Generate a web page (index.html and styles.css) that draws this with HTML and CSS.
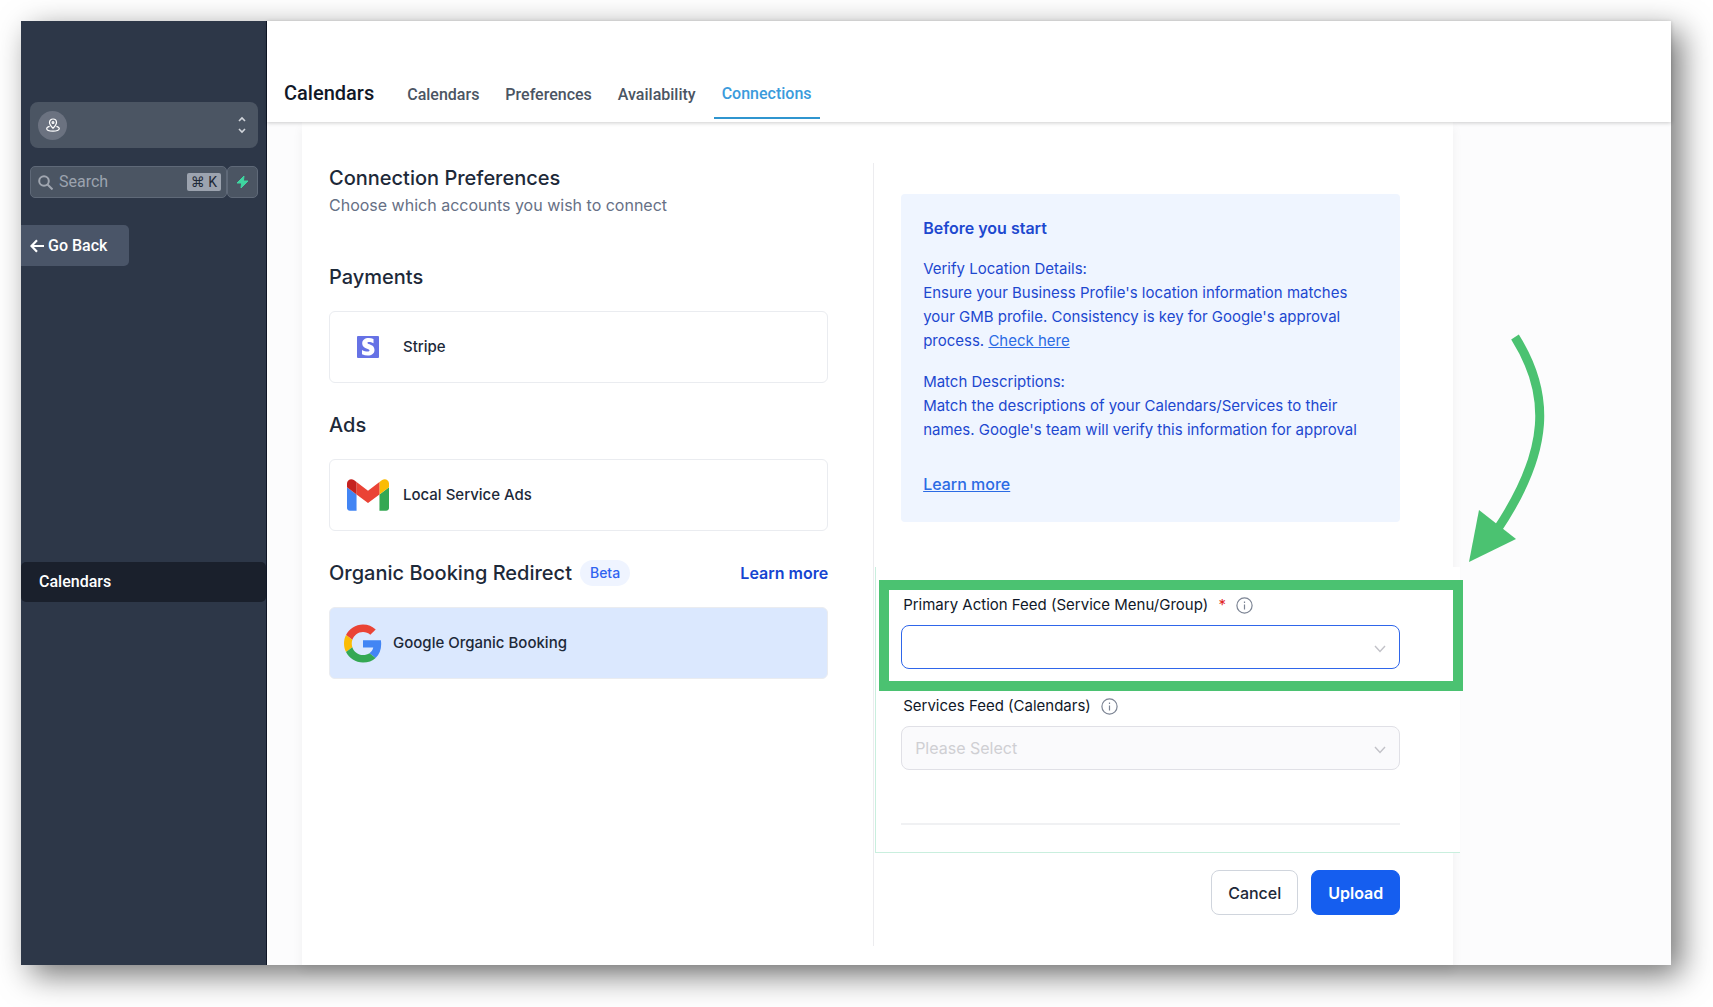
FILE: index.html
```
<!DOCTYPE html>
<html lang="en">
  <head>
    <meta charset="UTF-8" />
    <meta name="viewport" content="width=device-width, initial-scale=1.0" />
    <title>Calendars - Connections</title>
    <link rel="stylesheet" href="styles.css">
  </head>
  <body>
    <div class="window">
      <aside class="sidebar">
        <button class="location-switcher" aria-label="Switch location">
          <span class="location-avatar">
            <svg width="14" height="14" viewBox="0 0 14 14" fill="none" stroke="#fff" stroke-width="1.2">
              <path d="M7 10.2C5 8.3 3.5 6.600 3.500 4.500a3.500 3.500 0 0 1 7 0C10.500 6.600 9 8.300 7 10.200z" />
              <circle cx="7" cy="4.600" r="0.900" />
              <path d="M3.600 8.300C1.800 8.800.7 9.600.7 10.500c0 1.600 2.800 2.700 6.300 2.700s6.300-1.100 6.300-2.700c0-.9-1.100-1.700-2.900-2.200" />
            </svg>
          </span>
          <svg width="8" height="18" viewBox="0 0 8 18" fill="none" stroke="#d1d5db" stroke-width="1.6">
            <path d="M1 5l3-3 3 3M1 13l3 3 3-3" />
          </svg>
        </button>

        <div class="search-row">
          <div class="search-box">
            <svg width="15" height="15" viewBox="0 0 15 15" fill="none" stroke="#a0a6b0" stroke-width="2">
              <circle cx="6" cy="6" r="4.800" />
              <path d="M9.500 9.500l5 5" />
            </svg>
            <input class="search-input" type="text" placeholder="Search" aria-label="Search" />
            <kbd class="shortcut">⌘ K</kbd>
          </div>
          <button class="quick-actions" aria-label="Quick actions">
            <svg width="13" height="14" viewBox="0 0 13 14" fill="#3ed6a0" stroke="#3ed6a0" stroke-linejoin="round">
              <path d="M8 1L1 8h4.600L5 13l7-7H7.400z" />
            </svg>
          </button>
        </div>

        <button class="go-back">
          <svg width="14" height="14" viewBox="0 0 14 14" fill="none" stroke="#fff" stroke-width="2.200">
            <path d="M7 1.200L1.500 7 7 12.800M1.500 7H14" />
          </svg>
          Go Back
        </button>

        <nav class="sidebar-nav">
          <a class="sidebar-link" href="#">Calendars</a>
        </nav>
      </aside>

      <div class="main">
        <header class="topbar">
          <h1 class="page-title">Calendars</h1>
          <nav class="tabs">
            <a class="tab" href="#">Calendars</a>
            <a class="tab" href="#">Preferences</a>
            <a class="tab" href="#">Availability</a>
            <a class="tab tab-active" href="#">Connections</a>
          </nav>
        </header>

        <main class="panel">
          <section class="connections">
            <h2 class="heading">Connection Preferences</h2>
            <p class="subtitle">Choose which accounts you wish to connect</p>

            <div class="group">
              <h3 class="heading">Payments</h3>
              <button class="connection">
                <span class="connection-icon">
                  <svg width="22" height="22" viewBox="0 0 22 22">
                    <rect width="22" height="22" rx="1" fill="#6672e5" />
                    <path d="M16.500 3v4.200c-1.500-.8-3.200-1.300-4.500-1.300-1.100 0-1.600.3-1.600.9 0 2 7.100 1.300 7.100 7.100 0 3.600-2.800 5.500-6.800 5.500-1.900 0-3.800-.4-5.700-1.200v-4.300c1.800 1 3.900 1.600 5.700 1.600 1.100 0 1.800-.3 1.800-1 0-2.200-7.300-1.500-7.300-7C5.200 4 7.900 2.100 11.800 2.100c1.600 0 3.200.3 4.700.9z" fill="#fff" />
                  </svg>
                </span>
                Stripe
              </button>
            </div>

            <div class="group">
              <h3 class="heading">Ads</h3>
              <button class="connection">
                <span class="connection-icon">
                  <svg width="42" height="32" viewBox="52 42 88 66">
                    <path fill="#4285f4" d="M58 108h14V74L52 59v43c0 3.320 2.690 6 6 6" />
                    <path fill="#34a853" d="M120 108h14c3.320 0 6-2.690 6-6V59l-20 15" />
                    <path fill="#fbbc04" d="M120 48v26l20-15v-8c0-7.420-8.470-11.650-14.400-7.200" />
                    <path fill="#ea4335" d="M72 74V48l24 18 24-18v26L96 92" />
                    <path fill="#c5221f" d="M52 51v8l20 15V48l-5.600-4.200c-5.940-4.450-14.400-.22-14.400 7.200" />
                  </svg>
                </span>
                Local Service Ads
              </button>
            </div>

            <div class="group">
              <div class="group-head">
                <h3 class="heading">Organic Booking Redirect</h3>
                <span class="badge">Beta</span>
                <a class="group-link" href="#">Learn more</a>
              </div>
              <button class="connection connection-selected">
                <svg width="38" height="39" viewBox="0 0 48 48">
                  <path fill="#ea4335" d="M24 9.500c3.540 0 6.710 1.220 9.210 3.600l6.850-6.850C35.900 2.380 30.470 0 24 0 14.620 0 6.510 5.380 2.560 13.220l7.980 6.190C12.430 13.720 17.740 9.500 24 9.500z" />
                  <path fill="#4285f4" d="M46.980 24.550c0-1.570-.15-3.090-.38-4.550H24v9.020h12.940c-.58 2.960-2.260 5.480-4.780 7.180l7.730 6c4.510-4.180 7.090-10.360 7.090-17.650z" />
                  <path fill="#fbbc05" d="M10.530 28.590c-.48-1.450-.76-2.990-.76-4.590s.27-3.140.76-4.590l-7.980-6.190C.92 16.460 0 20.120 0 24c0 3.880.92 7.540 2.560 10.780l7.970-6.190z" />
                  <path fill="#34a853" d="M24 48c6.480 0 11.930-2.130 15.890-5.810l-7.730-6c-2.150 1.450-4.920 2.300-8.160 2.300-6.260 0-11.570-4.220-13.470-9.910l-7.980 6.190C6.510 42.620 14.620 48 24 48z" />
                </svg>
                Google Organic Booking
              </button>
            </div>
          </section>

          <div class="divider"></div>

          <section class="setup">
            <div class="notice">
              <h4 class="notice-title">Before you start</h4>
              <p>
                Verify Location Details:<br />
                Ensure your Business Profile's location information matches<br />
                your GMB profile. Consistency is key for Google's approval<br />
                process. <a class="notice-link" href="#">Check here</a>
              </p>
              <p>
                Match Descriptions:<br />
                Match the descriptions of your Calendars/Services to their<br />
                names. Google's team will verify this information for approval
              </p>
              <a class="notice-link notice-more" href="#">Learn more</a>
            </div>

            <form class="fields">
              <div class="field">
                <div class="field-head">
                  <label for="primary-feed">Primary Action Feed (Service Menu/Group) <span class="required">*</span></label>
                  <svg width="17" height="17" viewBox="0 0 17 17" fill="none" stroke="#7c8494">
                    <circle cx="8.500" cy="8.500" r="7.600" stroke-width="1.200" />
                    <path d="M8.500 7.500v5M8.500 4.500v1.400" stroke-width="1.200" />
                  </svg>
                </div>
                <div class="select-wrap">
                  <select class="select select-focused" id="primary-feed">
                    <option></option>
                  </select>
                  <svg class="chevron" width="12" height="8" viewBox="0 0 12 8" fill="none" stroke="#c2c2c8" stroke-width="1.400">
                    <path d="M1 1l5 5.500L11 1" />
                  </svg>
                </div>
              </div>

              <div class="field">
                <div class="field-head">
                  <label for="services-feed">Services Feed (Calendars)</label>
                  <svg width="17" height="17" viewBox="0 0 17 17" fill="none" stroke="#7c8494">
                    <circle cx="8.500" cy="8.500" r="7.600" stroke-width="1.200" />
                    <path d="M8.500 7.500v5M8.500 4.500v1.400" stroke-width="1.200" />
                  </svg>
                </div>
                <div class="select-wrap">
                  <select class="select" id="services-feed" disabled>
                    <option>Please Select</option>
                  </select>
                  <svg class="chevron" width="12" height="8" viewBox="0 0 12 8" fill="none" stroke="#c2c2c8" stroke-width="1.400">
                    <path d="M1 1l5 5.500L11 1" />
                  </svg>
                </div>
              </div>

              <hr class="rule" />

              <div class="highlight"></div>
              <svg class="arrow" width="80" height="230" viewBox="0 0 80 230">
                <path d="M46 4C82 61 81 118 28 197" fill="none" stroke="#4bc271" stroke-width="9" />
                <path d="M10 177l37 29L0 229z" fill="#4bc271" />
              </svg>
            </form>

            <div class="actions">
              <button class="btn">Cancel</button>
              <button class="btn btn-primary">Upload</button>
            </div>
          </section>
        </main>
      </div>
    </div>
  </body>
</html>
```
FILE: styles.css
```
* {
  margin: 0;
  padding: 0;
  box-sizing: border-box;
}

body {
  min-height: 100vh;
  padding: 21px 42px 42px 21px;
  display: flex;
  background-color: white;
  font-family: Inter, "Liberation Sans", sans-serif;
  font-size: 16px;
  line-height: 24px;
  color: #1d2939;
}

button,
input,
select {
  font: inherit;
  color: inherit;
}

button {
  cursor: pointer;
  border: none;
}

svg {
  flex-shrink: 0;
}

.window {
  flex: 1;
  display: flex;
  background-color: #fcfcfd;
  box-shadow: 10px 10px 30px rgba(0, 0, 0, 0.55);
}

/* Sidebar */
.sidebar {
  width: 246px;
  flex-shrink: 0;
  padding-top: 81px;
  background-color: #2d3748;
  border-right: 1px solid #0f1626;
  font-family: Roboto, sans-serif;
  display: flex;
  flex-direction: column;
}

.location-switcher {
  height: 46px;
  margin: 0 8px 0 9px;
  padding: 0 12px 0 8px;
  display: flex;
  justify-content: space-between;
  align-items: center;
  background-color: #4b5563;
  border-radius: 8px;
}

.location-avatar {
  width: 29px;
  height: 29px;
  display: flex;
  align-items: center;
  justify-content: center;
  border-radius: 50%;
  background-color: #6b7280;
}

.search-row {
  display: flex;
  height: 32px;
  margin: 18px 8px 27px 9px;
}

.search-box,
.quick-actions {
  display: flex;
  align-items: center;
  background-color: #4b5563;
  border: 1px solid #5f6978;
  border-radius: 5px;
}

.search-box {
  flex: 1;
  min-width: 0;
  padding: 0 5px 0 7px;
}

.search-input {
  flex: 1;
  min-width: 0;
  margin-left: 6px;
  background: none;
  border: none;
  outline: none;
}

.search-input::placeholder {
  color: #9ca3af;
}

.shortcut {
  flex-shrink: 0;
  padding: 0 4px;
  border-radius: 2px;
  background-color: #9ca3af;
  color: #1f2937;
  font-family: Roboto, "DejaVu Sans", sans-serif;
  font-size: 14px;
  line-height: 18px;
}

.quick-actions {
  width: 31px;
  flex-shrink: 0;
  justify-content: center;
}

.go-back {
  width: 108px;
  height: 41px;
  padding-left: 9px;
  display: flex;
  align-items: center;
  gap: 4px;
  background-color: #4a5568;
  color: white;
  font-weight: 500;
  border-radius: 0 5px 5px 0;
}

.sidebar-nav {
  margin-top: 296px;
}

.sidebar-link {
  display: block;
  padding: 8px 18px;
  border-radius: 5px;
  background-color: #1a202c;
  color: white;
  font-weight: 500;
  text-decoration: none;
}

/* Top bar */
.main {
  flex: 1;
  min-width: 0;
  display: flex;
  flex-direction: column;
}

.topbar {
  position: relative;
  height: 101px;
  padding: 0 17px 3px;
  display: flex;
  align-items: flex-end;
  background-color: white;
  box-shadow: 0 1px 4px rgba(0, 0, 0, 0.2);
  font-family: Roboto, sans-serif;
}

.page-title {
  margin-bottom: 14px;
  font-size: 20px;
  font-weight: 500;
  color: #111827;
}

.tabs {
  display: flex;
  align-items: flex-end;
  margin-left: 25px;
  gap: 10px;
}

.tab {
  padding: 0 8px 12px;
  font-weight: 500;
  color: #4b5563;
  text-decoration: none;
}

.tab-active {
  padding-bottom: 11px;
  color: #3b9bdc;
  border-bottom: 2px solid #2f95cf;
}

/* Panel */
.panel {
  flex: 1;
  width: 82%;
  margin-left: 35px;
  padding: 41px 53px 19px 27px;
  display: grid;
  grid-template-columns: 1fr auto 1fr;
  background-color: white;
  box-shadow: 0 6px 10px rgba(0, 0, 0, 0.06);
}

.divider {
  width: 1px;
  margin: 0 27px 0 45px;
  background-color: #ececef;
}

.heading {
  font-size: 20px;
  font-weight: 500;
  line-height: 30px;
}

.subtitle {
  margin-bottom: 45px;
  color: #667085;
}

.group {
  margin-bottom: 27px;
}

.group-head {
  display: flex;
  align-items: center;
}

.badge {
  margin-left: 8px;
  padding: 0 10px;
  border-radius: 13px;
  background-color: #eff4ff;
  color: #2f63f0;
  font-size: 14px;
  font-weight: 500;
  line-height: 26px;
}

.group-link {
  margin-left: auto;
  color: #1544d1;
  font-weight: 600;
  text-decoration: none;
}

.connection {
  width: 100%;
  height: 72px;
  margin-top: 19px;
  padding: 0 14px;
  display: flex;
  align-items: center;
  gap: 11px;
  background-color: white;
  border: 1px solid #eaecf0;
  border-radius: 6px;
  font-size: 15px;
  font-weight: 500;
}

.connection-icon {
  width: 48px;
  display: flex;
  justify-content: center;
}

.connection-selected {
  background-color: #dbe8fe;
}

/* Setup column */
.setup {
  padding-top: 31px;
}

.notice {
  padding: 22px 22px 26px;
  border-radius: 4px;
  background-color: #eff5ff;
  color: #1d48cf;
}

.notice-title {
  font-weight: 600;
}

.notice p {
  margin-top: 17px;
  font-size: 15px;
}

.notice-link {
  color: #2b6be4;
}

.notice-more {
  display: inline-block;
  margin-top: 30px;
  font-weight: 500;
}

.fields {
  position: relative;
  margin: 45px -60px 17px -26px;
  padding: 26px 60px 27px 25px;
  background-color: white;
  border-left: 1px solid #c9efde;
  border-bottom: 1px solid #c9efde;
}

.field {
  margin-bottom: 25px;
}

.field-head {
  display: flex;
  align-items: center;
  gap: 10px;
  margin-bottom: 8px;
  padding-left: 2px;
  font-size: 15px;
  color: #101828;
}

.required {
  margin-left: 6px;
  color: #e02424;
}

.select-wrap {
  position: relative;
}

.select {
  display: block;
  width: 100%;
  height: 44px;
  padding: 0 40px 0 13px;
  appearance: none;
  background-color: white;
  border: 1px solid #e0e0e6;
  border-radius: 8px;
}

.select:disabled {
  background-color: #fafafc;
  color: #cfcfd3;
  opacity: 1;
}

.select-focused {
  border-color: #2f66ea;
}

.chevron {
  position: absolute;
  right: 14px;
  top: 20px;
  pointer-events: none;
}

.rule {
  margin-top: 53px;
  border: none;
  border-top: 2px solid #f0f1f3;
}

/* Callout drawn over the form */
.highlight {
  position: absolute;
  top: 13px;
  left: 3px;
  right: -3px;
  height: 111px;
  border: 10px solid #4bc271;
  pointer-events: none;
}

.arrow {
  position: absolute;
  top: -234px;
  right: -89px;
  pointer-events: none;
}

.actions {
  display: flex;
  justify-content: flex-end;
  gap: 13px;
}

.btn {
  height: 45px;
  padding: 0 16px;
  border: 1px solid #d0d5dd;
  border-radius: 8px;
  background-color: white;
  font-weight: 500;
}

.btn-primary {
  border-color: #155eef;
  background-color: #155eef;
  color: white;
  font-weight: 600;
}
```
